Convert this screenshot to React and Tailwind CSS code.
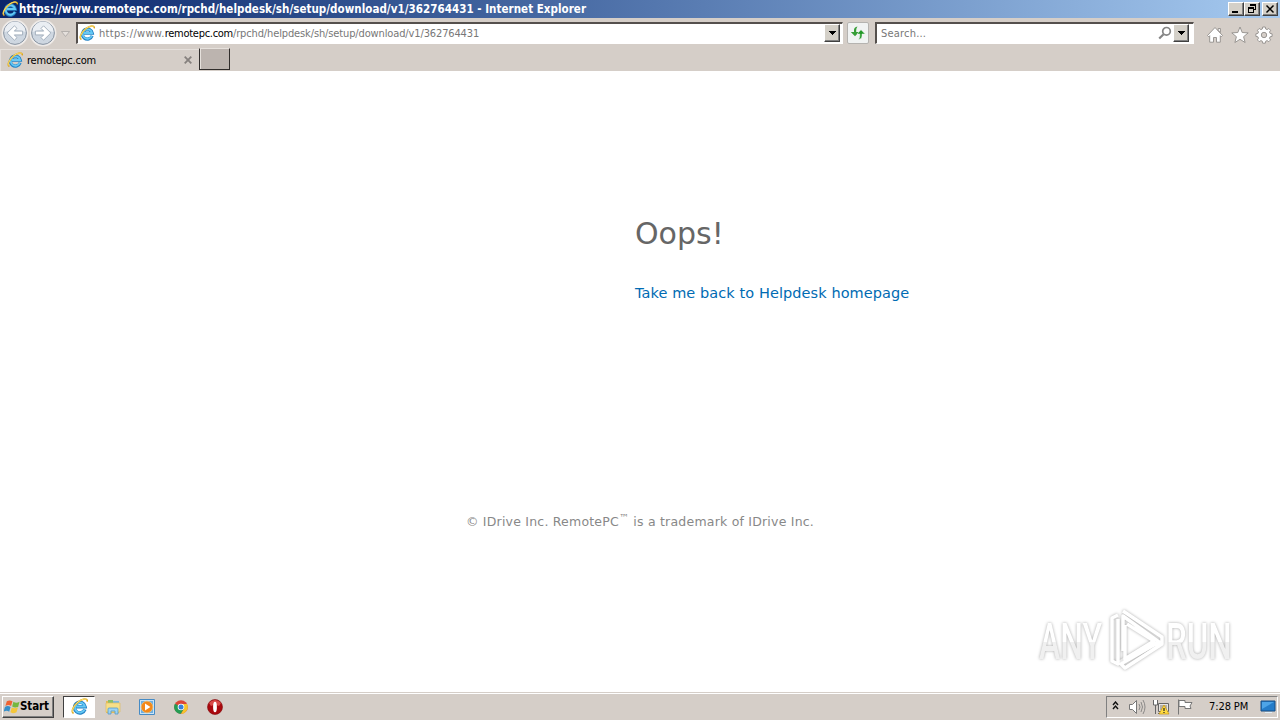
const shortcuts = [
  { name: 'Explorer', Icon: FolderIcon },
  { name: 'Media Player', Icon: MediaIcon },
  { name: 'Chrome', Icon: ChromeIcon },
  { name: 'Opera', Icon: OperaIcon },
];

const raised = 'border border-t-white border-l-white border-r-[#404040] border-b-[#404040] shadow-[inset_-1px_-1px_0_#808080]';
const field = 'border-b border-l-2 border-r border-t-2 border-b-white border-l-[#55504d] border-r-white border-t-[#55504d] bg-white';

function IeIcon({ className }) {
  return (
    <svg viewBox="0 0 16 16" className={className} fill="none">
      <path d="M13.1 10.7A5 5 0 1 1 13.3 8.2H5" stroke="#2583c5" strokeWidth="3.2" />
      <path d="M12.8 10.7A4.7 4.7 0 1 1 13 8H5" stroke="#65c9f5" strokeWidth="1.8" />
      <path d="M2.5 14.4C-.6 13.4 2.4 7.3 6.6 3.9 10.2.9 15.7-.7 15.3 3.4" stroke="#dba51c" strokeWidth="1.5" />
      <path d="M1.6 13.4C.4 11.6 3.3 6.7 6.7 3.7c3-2.5 7.1-3.4 8-1.9" stroke="#ffe579" strokeWidth=".9" />
    </svg>
  );
}

function NavButton({ flip }) {
  return (
    <svg viewBox="0 0 28 28" className="size-7 shrink-0">
      <circle cx="14" cy="14" r="12.7" fill="#f2f3f4" stroke="#eeeae7" strokeWidth="1.5" />
      <circle cx="14" cy="14" r="11.4" fill="#ced7e1" stroke="#8792a0" />
      <path d="M3.5 13a10.5 10.5 0 0 1 21 0Q14 9 3.5 13Z" fill="#eaeef3" />
      <path
        d="M6.2 14 13.4 6.8 16 9.4 13.3 12.1h8.3v3.8h-8.3l2.7 2.7-2.6 2.6Z"
        fill="#fff"
        stroke="#94a2b1"
        strokeWidth=".8"
        transform={flip ? 'rotate(180 14 14)' : undefined}
      />
    </svg>
  );
}

function FolderIcon() {
  return (
    <svg viewBox="0 0 18 18" className="size-[18px]">
      <path d="M2 3h6l1 1h6v11H2Z" fill="#e3bb55" />
      <path d="M4 2h5v3H4Z" fill="#8abf69" />
      <path d="M9 3h6v3H9Z" fill="#7cb8dc" />
      <path d="M2 5h14v9H2Z" fill="#f7df87" stroke="#dfbc62" strokeWidth=".7" />
      <path d="M4 16v-5q0-1 1-1h8q1 0 1 1v5h-3v-3H7v3Z" fill="#9bd3f3" stroke="#559bc5" strokeWidth=".8" />
    </svg>
  );
}

function MediaIcon() {
  return (
    <svg viewBox="0 0 18 18" className="size-[18px]">
      <path d="M1.5 1.5h15v15h-15Z" fill="#c8e4f8" stroke="#468bc5" />
      <path d="M3 3h12v12H3Z" fill="#70afe0" />
      <circle cx="9" cy="9" r="5.8" fill="#f38819" stroke="#fbc16c" strokeWidth=".7" />
      <path d="m7 5.5 5.4 3.5L7 12.5Z" fill="#fff" />
    </svg>
  );
}

function ChromeIcon() {
  return (
    <svg viewBox="0 0 18 18" className="size-[18px]">
      <circle cx="9" cy="9" r="6.8" fill="#dc4537" />
      <path d="M2.9 5.8A6.8 6.8 0 0 0 9 15.8l3-5.1L9 9Z" fill="#249c54" />
      <path d="M15.1 6H9l3 4.7-3 5.1A6.8 6.8 0 0 0 15.1 6Z" fill="#f6c52c" />
      <circle cx="9" cy="9" r="3.3" fill="#fff" />
      <circle cx="9" cy="9" r="2.5" fill="#367fdb" />
    </svg>
  );
}

function OperaIcon() {
  return (
    <svg viewBox="0 0 18 18" className="size-[18px]">
      <circle cx="9" cy="9" r="7.5" fill="#a9090e" stroke="#83080b" strokeWidth=".6" />
      <path d="M3 5Q9-1 15 5L13 8Q9 6 5 8Z" fill="#d94a48" />
      <ellipse cx="9" cy="9" rx="1.9" ry="5.3" fill="#fff" />
    </svg>
  );
}

function WindowButton({ children }) {
  return (
    <button className={`flex h-[14px] w-4 items-center justify-center bg-[#d4d0c8] ${raised}`}>
      <svg viewBox="0 0 12 10" className="h-[10px] w-3" fill="none" stroke="#000" shapeRendering="crispEdges">{children}</svg>
    </button>
  );
}

function DropButton() {
  return (
    <button className={`mb-px flex h-[18px] w-4 shrink-0 items-center justify-center bg-[#d4d0c8] ${raised}`}>
      <svg viewBox="0 0 7 4" className="h-1 w-[7px]" shapeRendering="crispEdges"><path d="M0 0h7L3.5 4Z" /></svg>
    </button>
  );
}

function TitleBar() {
  return (
    <header className="flex h-[18px] items-center bg-linear-to-r from-[#0a246a] to-[#a6caf0] pl-[2px] pr-[2px]">
      <IeIcon className="size-4 shrink-0" />
      <span className="ml-[1px] grow whitespace-nowrap text-[11.5px] font-bold leading-[18px] tracking-[0.035px] text-white">
        https://www.remotepc.com/rpchd/helpdesk/sh/setup/download/v1/362764431 - Internet Explorer
      </span>
      <div className="flex">
        <WindowButton><path d="M2 8h6" strokeWidth="2" /></WindowButton>
        <WindowButton>
          <path d="M4.5 1.5h5v4h-2M4 1.5h6M2.5 4.5h5v4h-5ZM2 4.5h6M4 .5h6M2 3.5h6" />
        </WindowButton>
        <span className="w-[2px]" />
        <WindowButton><path d="m2.5 1.5 7 7m0-7-7 7" strokeWidth="1.5" shapeRendering="auto" /></WindowButton>
      </div>
    </header>
  );
}

function Toolbar() {
  return (
    <div className="flex h-[30px] pt-[4px]">
      <div className="ml-[1px] flex w-14 -mt-[3px]"><NavButton /><NavButton flip /></div>
      <svg viewBox="0 0 9 6" className="ml-[4px] mt-[9px] h-[6px] w-[9px]"><path d="M.5.5h8L4.5 5.5Z" fill="#e5e0dc" stroke="#aaa6a3" strokeWidth=".8" /></svg>
      <div className={`ml-[6px] flex h-[22px] w-[767px] items-center pl-[1px] pr-[2px] ${field}`}>
        <IeIcon className="mb-px size-4 shrink-0" />
        <span className="ml-1 mt-px grow whitespace-nowrap text-[11px] text-[#777]">
          <span className="tracking-[0.32px]">https://www.</span>
          <span className="tracking-[-0.28px] text-black">remotepc.com</span>
          <span className="tracking-[-0.13px]">/rpchd/helpdesk/sh/setup/download/v1/362764431</span>
        </span>
        <DropButton />
      </div>
      <button className="ml-1 flex h-[22px] w-[22px] items-center justify-center rounded-[2px] border border-[#b5b3b0] bg-[#f1f3f3]">
        <svg viewBox="0 0 16 14" className="h-[14px] w-4 shrink-0">
          <path d="M7.5.5Q4 1 4 4v2H.8L5 10.3 9 6H6.2V4Q6.2 2.3 7.5.5Z" fill="#379e38" />
          <path d="M8.5 13.5Q12 13 12 10V8h3.2L11 3.7 7 8h2.8v2Q9.8 11.7 8.5 13.5Z" fill="#239929" stroke="#f1f3f3" strokeWidth=".5" />
        </svg>
      </button>
      <div className={`ml-[6px] flex h-[22px] w-[319px] items-center pl-[4px] pr-[4px] ${field}`}>
        <span className="mt-px grow text-[11px] tracking-[0.2px] text-[#777]">Search...</span>
        <svg viewBox="0 0 14 14" className="mb-px mr-[1px] size-[14px]" fill="none" stroke="#858585">
          <circle cx="8.5" cy="5.3" r="3.8" strokeWidth="1.7" /><path d="m5.6 8.2-4.4 4.3" strokeWidth="2.2" />
        </svg>
        <DropButton />
      </div>
      <div className="ml-[12px] mt-[4px] flex gap-[6.5px]">
        <svg viewBox="0 0 18 18" className="size-[18px]"><path d="M1.5 9.5 9 1.5l7.5 8-1.2 1.2-1-1v6.5h-3.8v-4.7h-3v4.7H3.7V9.7l-1 1ZM12.2 2.5h2.2v4l-2.2-2Z" fill="#fff" stroke="#918d8a" strokeWidth=".9" /></svg>
        <svg viewBox="0 0 18 18" className="size-[18px]"><path d="m9 1 2.2 5.5 6 .4-4.6 3.8 1.5 5.8L9 13.3l-5.1 3.2 1.5-5.8L.8 6.9l6-.4Z" fill="#fff" stroke="#918d8a" strokeWidth=".9" /></svg>
        <svg viewBox="0 0 18 18" className="size-[18px]"><path d="M7.7 1h2.6l.4 2 1.4.6 1.7-1.1 1.8 1.8-1.1 1.7.6 1.4 2 .4v2.6l-2 .4-.6 1.4 1.1 1.7-1.8 1.8-1.7-1.1-1.4.6-.4 2H7.7l-.4-2-1.4-.6-1.7 1.1-1.8-1.8 1.1-1.7-.6-1.4-2-.4V7.8l2-.4.6-1.4-1.1-1.7 1.8-1.8 1.7 1.1L7.3 3Z" fill="#fff" stroke="#918d8a" strokeWidth=".9" /><circle cx="9" cy="9" r="2.7" fill="#d5cec8" stroke="#918d8a" strokeWidth=".9" /></svg>
      </div>
    </div>
  );
}

function TabBar() {
  return (
    <div className="flex h-[23px]">
      <div className="mt-px flex h-[22px] w-[199px] items-center border-l border-t border-[#e5e0dc] pl-[6px]">
        <IeIcon className="mb-[2px] size-4" />
        <span className="ml-[4px] mt-px grow text-[11px] tracking-[-0.22px]">remotepc.com</span>
        <svg viewBox="0 0 8 8" className="mb-[2px] mr-[7px] size-2" stroke="#86817e" strokeWidth="1.8"><path d="m.7.7 6.6 6.6m0-6.6L.7 7.3" /></svg>
      </div>
      <div className="h-[22px] w-[31px] border border-b-[#302d2b] border-l-[#302d2b] border-r-[#302d2b] border-t-[#e6e1dc] bg-[#bcb4af] shadow-[inset_1px_0_#e6e1dc]" />
    </div>
  );
}

const glyphFill = 'bg-linear-to-b from-white from-50% to-[#f0f0f0] to-50% bg-clip-text text-transparent';

function Watermark() {
  return (
    <div className="flex h-[68px] w-[200px] items-center font-['Roboto',sans-serif] text-[50px] font-medium leading-none drop-shadow-[0_0_1.5px_#aaa]">
      <div className="ml-[3px] w-[69px] pt-[4px]"><div className={`w-[120px] origin-left scale-x-[.64] ${glyphFill}`}>ANY</div></div>
      <svg viewBox="0 0 58 64" className="h-[64px] w-[58px] shrink-0" fill="none" stroke="#fff" strokeWidth="3.5" strokeLinejoin="round">
        <path d="m11 54 7-4 28-17m-29 27 35-23" stroke="#e7e7e7" strokeWidth="3" />
        <path d="M10 7 4 10v43l6 3V11M15 3l39 26v7L17 60l-4-4 38-22L15 8v35M19 16l27 17-29 18V17" />
      </svg>
      <div className="w-[66px] pt-[4px]"><div className={`w-[120px] origin-left scale-x-[.66] ${glyphFill}`}>RUN</div></div>
    </div>
  );
}

function ErrorPage() {
  return (
    <main className="relative h-[621px] bg-white pt-[142px] font-['DejaVu_Sans',sans-serif]">
      <div className="ml-[635px]">
        <h1 className="text-[30px] leading-[42px] text-[#666]">Oops!</h1>
        <a className="mt-[28px] inline-block whitespace-nowrap text-[14.5px] leading-5 tracking-[0.08px] text-[#006bb3]">Take me back to Helpdesk homepage</a>
      </div>
      <p className="mt-[207px] text-center text-[12.5px] leading-5 tracking-[0.21px] text-[#888]">
        © IDrive Inc. RemotePC<sup className="text-[10px]">™</sup> is a trademark of IDrive Inc.
      </p>
      <div className="absolute bottom-[18px] right-[44px]"><Watermark /></div>
    </main>
  );
}

function Tray() {
  return (
    <div className="ml-auto mr-[2px] flex h-[22px] w-[172px] items-center border border-b-white border-l-[#808080] border-r-white border-t-[#808080] pl-[5px]">
      <svg viewBox="0 0 7 9" className="mb-[2px] h-[9px] w-[7px]" fill="none" stroke="#111" strokeWidth="1.4"><path d="m1 4 2.5-3L6 4M1 8l2.5-3L6 8" /></svg>
      <svg viewBox="0 0 18 18" className="ml-[9px] size-[18px]" fill="none" stroke="#777"><path d="M1.5 6.5h3l4-4v13l-4-4h-3Z" fill="#fff" /><path d="M11 6q2 3 0 6m2-8q3 5 0 10m2-12q4 7 0 14" strokeWidth=".8" /></svg>
      <svg viewBox="0 0 18 18" className="ml-[6px] size-[18px]"><path d="M6.5 5.5h10v8h-10Z" fill="#e7e5e2" stroke="#666" /><path d="M8 7h7v5H8Z" fill="#b3b0ac" /><path d="M1.5 2v5h4V2m-2 5v9M6 15.5h5" fill="#fff" stroke="#666" /><path d="m12 7 5 9H7Z" fill="#ffdc43" stroke="#c9940b" strokeWidth=".7" /><path d="M12 10v3m0 1v1" stroke="#222" strokeWidth="1.2" /></svg>
      <svg viewBox="0 0 18 18" className="ml-[6px] size-[18px]" fill="#fff" stroke="#777"><path d="M2.5 1.5v15M3 2.5h6v2h7l-2 3.5 1 2.5H9v-2H3Z" /></svg>
      <span className="ml-[15px] mt-px whitespace-nowrap text-[11px] tracking-[-0.1px]">7:28 PM</span>
      <svg viewBox="0 0 16 16" className="ml-auto mr-px size-4"><path d="M1 2h14v10H1Z" fill="#247cc9" stroke="#174c83" /><path d="M2 3h12L2 10Z" fill="#4da4e7" /><path d="M5 13h7v1H5Z" fill="#e1eef7" /></svg>
    </div>
  );
}

function Taskbar() {
  return (
    <footer className="flex h-7 items-center border-t border-[#d5cec8] bg-[#d5cec8] shadow-[inset_0_1px_#fff]">
      <button className={`ml-[2px] flex h-[22px] w-[52px] items-center pl-[1px] ${raised}`}>
        <svg viewBox="0 0 17 16" className="h-4 w-4 shrink-0">
          <path d="M3 2q3-2 6 0L7.5 7Q5 5 1.5 7Z" fill="#ef6332" />
          <path d="M10 2.5q3 2 6.5 0L15 8q-4 1-6.3-.5Z" fill="#75b73e" />
          <path d="M1 8q3-2 6 0l-1.5 5Q3 11-.5 13Z" fill="#368fc9" />
          <path d="M8.3 8.5q3 1.5 6.5 0l-1.5 5q-4 2-6.5.2Z" fill="#f4c63a" />
        </svg>
        <span className="mt-px text-[11.5px] font-bold tracking-[-0.1px]">Start</span>
      </button>
      <div className="ml-[9px] flex h-[22px] w-8 items-center justify-center border border-b-white border-l-[#404040] border-r-white border-t-[#404040] bg-white"><IeIcon className="size-[17px]" /></div>
      <div className="ml-[9px] flex gap-4">
        {shortcuts.map(({ name, Icon }) => <span key={name} aria-label={name}><Icon /></span>)}
      </div>
      <Tray />
    </footer>
  );
}

export default function App() {
  return (
    <div className="flex h-[720px] w-[1280px] flex-col overflow-hidden bg-[#d5cec8] font-['DejaVu_Sans_Condensed','DejaVu_Sans',sans-serif] text-black">
      <TitleBar />
      <Toolbar />
      <TabBar />
      <ErrorPage />
      <Taskbar />
    </div>
  );
}
